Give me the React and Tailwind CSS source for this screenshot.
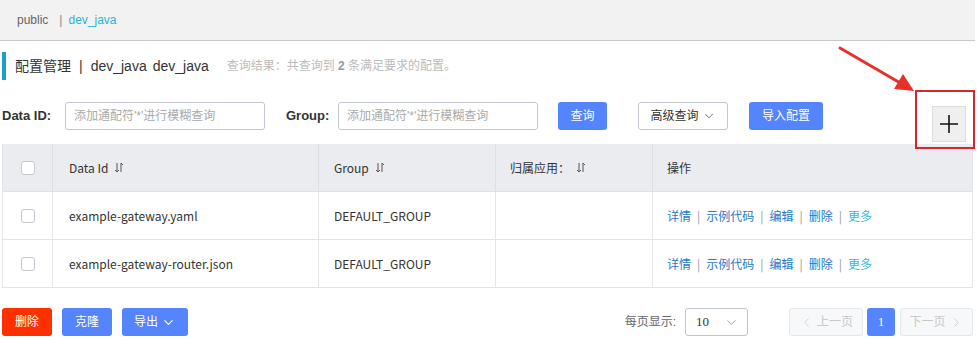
import { ChevronDown, ChevronLeft, ChevronRight } from "lucide-react";

const font = { fontFamily: '"Liberation Sans", "Noto Sans CJK SC", sans-serif' };
const cjk = { fontFamily: '"Noto Sans CJK SC", sans-serif' };

const SortIcon = () => (
    <svg width="10" height="11" viewBox="0 0 10 11" className="inline-block ml-[6px]" fill="none" stroke="#555" strokeWidth="1">
        <path d="M3 1v9M1 8l2 2 2-2" />
        <path d="M7 10V1M7 1l2 2" />
    </svg>
);

const Checkbox = () => (
    <span className="block w-[14px] h-[14px] rounded-[3px] border border-[#c4c6cf] bg-white" />
);

const rows = [
    { id: "example-gateway.yaml", group: "DEFAULT_GROUP" },
    { id: "example-gateway-router.json", group: "DEFAULT_GROUP" },
];

const Actions = () => (
    <div className="flex items-center gap-[6px] text-[12px]">
        <span className="text-[#2777c9]">详情</span>
        <span className="text-[#999]">|</span>
        <span className="text-[#2777c9]">示例代码</span>
        <span className="text-[#999]">|</span>
        <span className="text-[#2777c9]">编辑</span>
        <span className="text-[#999]">|</span>
        <span className="text-[#2777c9]">删除</span>
        <span className="text-[#999]">|</span>
        <span className="text-[#3db8d3]">更多</span>
    </div>
);

export default function App() {
    return (
        <div className="relative w-[980px] h-[339px] bg-white overflow-hidden text-[#333]" style={font}>
            {/* breadcrumb bar */}
            <div className="w-[975px] h-[41px] bg-[#f2f2f2] border-b border-[#c8c8c8] flex items-center pl-[17px] text-[12px]">
                <span className="text-[#666]">public</span>
                <span className="text-[#888] ml-[11px] mr-[6px]">|</span>
                <span className="text-[#2fb3d8]">dev_java</span>
            </div>

            {/* title */}
            <div className="flex items-center mt-[11px] ml-[2px] h-[28px]">
                <span className="w-[4px] h-[28px] bg-[#1b9fc3]" />
                <span className="ml-[9px] text-[14px] text-[#333]">配置管理</span>
                <span className="mx-[8px] text-[14px] text-[#333]">|</span>
                <span className="text-[14px] text-[#333]">dev_java</span>
                <span className="ml-[6px] text-[14px] text-[#333]">dev_java</span>
                <span className="ml-[18px] text-[12px] text-[#bbb]">
                    查询结果：共查询到 <b className="text-[#999]">2</b> 条满足要求的配置。
                </span>
            </div>

            {/* search row */}
            <div className="flex items-start mt-[22px] ml-[2px] h-[42px] w-[973px]">
                <span className="text-[13px] font-bold text-[#333] leading-[28px] w-[63px]">Data ID:</span>
                <div className="w-[200px] h-[28px] border border-[#c4c6cf] rounded-[3px] flex items-center px-[8px] text-[12px] text-[#aaa]">
                    添加通配符'*'进行模糊查询
                </div>
                <span className="ml-[21px] text-[13px] font-bold text-[#333] leading-[28px] w-[52px]">Group:</span>
                <div className="w-[200px] h-[28px] border border-[#c4c6cf] rounded-[3px] flex items-center px-[8px] text-[12px] text-[#aaa]">
                    添加通配符'*'进行模糊查询
                </div>
                <button className="ml-[20px] w-[49px] h-[28px] rounded-[3px] bg-[#5584ff] text-white text-[12px]">查询</button>
                <button className="ml-[31px] w-[90px] h-[28px] rounded-[3px] border border-[#c4c6cf] bg-white text-[12px] text-[#333] flex items-center justify-center gap-[3px]">
                    高级查询 <ChevronDown size={14} strokeWidth={1.2} />
                </button>
                <button className="ml-[21px] w-[74px] h-[28px] rounded-[3px] bg-[#5584ff] text-white text-[12px]">导入配置</button>
                <button className="ml-auto mr-[9px] mt-[4px] w-[34px] h-[36px] bg-[#efefef] border border-[#dcdcdc] flex items-center justify-center">
                    <svg width="20" height="20" viewBox="0 0 20 20" stroke="#111" strokeWidth="1.6">
                        <path d="M10 1v18M1 10h18" />
                    </svg>
                </button>
            </div>

            {/* table */}
            <div className="ml-[2px] w-[971px] border-l border-r border-[#e3e4e8] text-[12px]" style={cjk}>
                <div className="grid grid-cols-[50px_266px_177px_157px_1fr] h-[48px] bg-[#ebecf0] border-b border-[#e0e1e5]">
                    <div className="flex items-center justify-center border-r border-[#dedfe3]"><Checkbox /></div>
                    <div className="flex items-center pl-[16px] border-r border-[#dedfe3]">Data Id<SortIcon /></div>
                    <div className="flex items-center pl-[15px] border-r border-[#dedfe3]">Group<SortIcon /></div>
                    <div className="flex items-center pl-[14px] border-r border-[#dedfe3]">归属应用：<SortIcon /></div>
                    <div className="flex items-center pl-[14px]">操作</div>
                </div>
                {rows.map((r) => (
                    <div key={r.id} className="grid grid-cols-[50px_266px_177px_157px_1fr] h-[48px] border-b border-[#e3e4e8]">
                        <div className="flex items-center justify-center border-r border-[#e3e4e8]"><Checkbox /></div>
                        <div className="flex items-center pl-[16px] border-r border-[#e3e4e8]">{r.id}</div>
                        <div className="flex items-center pl-[15px] border-r border-[#e3e4e8]">{r.group}</div>
                        <div className="border-r border-[#e3e4e8]" />
                        <div className="flex items-center pl-[14px]"><Actions /></div>
                    </div>
                ))}
            </div>

            {/* footer */}
            <div className="flex items-center mt-[20px] ml-[2px] w-[971px] h-[28px] text-[12px]">
                <button className="w-[50px] h-[28px] rounded-[3px] bg-[#ff3000] text-white">删除</button>
                <button className="ml-[10px] w-[50px] h-[28px] rounded-[3px] bg-[#5584ff] text-white">克隆</button>
                <button className="ml-[10px] w-[66px] h-[28px] rounded-[3px] bg-[#5584ff] text-white flex items-center justify-center gap-[3px]">
                    导出 <ChevronDown size={15} strokeWidth={1.8} />
                </button>
                <span className="ml-auto text-[#666]">每页显示:</span>
                <div className="ml-[9px] w-[63px] h-[28px] border border-[#c4c6cf] rounded-[3px] flex items-center justify-between pl-[10px] pr-[8px]">
                    <span style={{ fontFamily: '"Liberation Serif", serif' }} className="text-[13px]">10</span>
                    <ChevronDown size={15} strokeWidth={1.2} className="text-[#888]" />
                </div>
                <div className="ml-[41px] w-[74px] h-[28px] border border-[#e6e7eb] bg-[#f7f8fa] rounded-[3px] flex items-center justify-center gap-[3px] text-[#c9c9c9]">
                    <ChevronLeft size={15} strokeWidth={1.3} />上一页
                </div>
                <div className="ml-[4px] w-[28px] h-[28px] rounded-[3px] bg-[#5584ff] text-white flex items-center justify-center text-[13px]" style={{ fontFamily: '"Liberation Serif", serif' }}>1</div>
                <div className="ml-[5px] w-[73px] h-[28px] border border-[#e6e7eb] bg-[#f7f8fa] rounded-[3px] flex items-center justify-center gap-[3px] text-[#c9c9c9]">
                    下一页<ChevronRight size={15} strokeWidth={1.3} />
                </div>
            </div>

            {/* annotation: red arrow and box */}
            <svg className="absolute left-[836px] top-[44px]" width="84" height="52" viewBox="0 0 84 52">
                <path d="M4 4L66 40" stroke="#e8302a" strokeWidth="3" strokeLinecap="round" />
                <path d="M78 47L58 45L67 30Z" fill="#e8302a" />
            </svg>
            <div className="absolute left-[915px] top-[90px] w-[60px] h-[59px] border-2 border-[#d9262c]" />
        </div>
    );
}
